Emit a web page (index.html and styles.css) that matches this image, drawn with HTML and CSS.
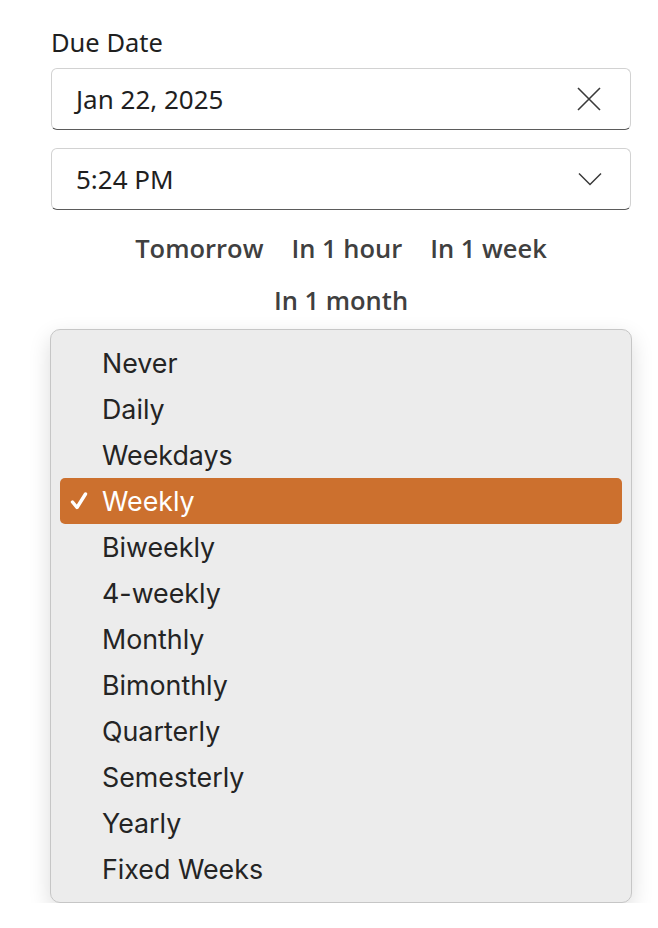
FILE: index.html
```html
<!DOCTYPE html>
<html>
<head>
<meta charset="utf-8">
<link rel="stylesheet" href="styles.css">
</head>
<body>
<div class="panel">
  <div class="label">Due Date</div>
  <div class="field">
    <span class="field-text">Jan 22, 2025</span>
    <svg class="field-icon" width="26" height="26" viewBox="0 0 26 26"><path d="M2 2 L24 24 M24 2 L2 24" stroke="#3a3a3a" stroke-width="1.6" fill="none"/></svg>
  </div>
  <div class="field">
    <span class="field-text">5:24 PM</span>
    <svg class="field-icon" width="24" height="14" viewBox="0 0 24 14"><path d="M1 1.5 L12 12.5 L23 1.5" stroke="#3a3a3a" stroke-width="1.5" fill="none"/></svg>
  </div>
  <div class="quick">
    <span>Tomorrow</span>
    <span>In 1 hour</span>
    <span>In 1 week</span>
    <span>In 1 month</span>
  </div>
  <ul class="menu">
    <li class="item">Never</li>
    <li class="item">Daily</li>
    <li class="item">Weekdays</li>
    <li class="item selected"><svg class="check" width="18" height="18" viewBox="0 0 18 18"><path d="M2.5 10 L7 15.5 L15.5 2" stroke="#fff" stroke-width="3.4" fill="none" stroke-linecap="round" stroke-linejoin="round"/></svg>Weekly</li>
    <li class="item">Biweekly</li>
    <li class="item">4-weekly</li>
    <li class="item">Monthly</li>
    <li class="item">Bimonthly</li>
    <li class="item">Quarterly</li>
    <li class="item">Semesterly</li>
    <li class="item">Yearly</li>
    <li class="item">Fixed Weeks</li>
  </ul>
</div>
</body>
</html>
```
FILE: styles.css
```css
html, body {
  margin: 0;
  padding: 0;
  background: #ffffff;
}
.panel {
  width: 582px;
  padding: 26px 0 0 50px;
  font-family: "Noto Sans", "Open Sans", sans-serif;
  color: #1f1f1f;
}
.label {
  font-size: 25.5px;
  line-height: 32px;
  margin-left: 1px;
  margin-bottom: 10px;
}
.field {
  margin-left: 1px;
  width: 580px;
  height: 62px;
  box-sizing: border-box;
  border: 1px solid #d2d2d2;
  border-bottom: 1.5px solid #5b5b5b;
  border-radius: 6px;
  display: flex;
  align-items: center;
  justify-content: space-between;
  padding: 0 28px 0 24px;
  margin-bottom: 18px;
  background: #fff;
}
.field-text {
  font-size: 26px;
}
.quick {
  display: flex;
  flex-wrap: wrap;
  justify-content: center;
  column-gap: 28px;
  font-family: "Open Sans", sans-serif;
  font-weight: 600;
  font-size: 25.5px;
  line-height: 52px;
  color: #404040;
  margin: -6px 0 3px 0;
  padding: 0 70px;
  width: 582px;
  box-sizing: border-box;
}
.menu {
  list-style: none;
  margin: 0;
  width: 582px;
  box-sizing: border-box;
  padding: 10px 9px;
  background: #ececec;
  border: 1px solid #c6c6c6;
  border-radius: 10px;
  box-shadow: 0 8px 22px rgba(0,0,0,0.14);
  font-family: "Inter", sans-serif;
  font-size: 26.8px;
  color: #242424;
}
.item {
  height: 46px;
  line-height: 46px;
  padding-left: 42px;
  border-radius: 5px;
  position: relative;
}
.item.selected {
  background: #cc702e;
  color: #ffffff;
}
.check {
  position: absolute;
  left: 10px;
  top: 14px;
}
```
